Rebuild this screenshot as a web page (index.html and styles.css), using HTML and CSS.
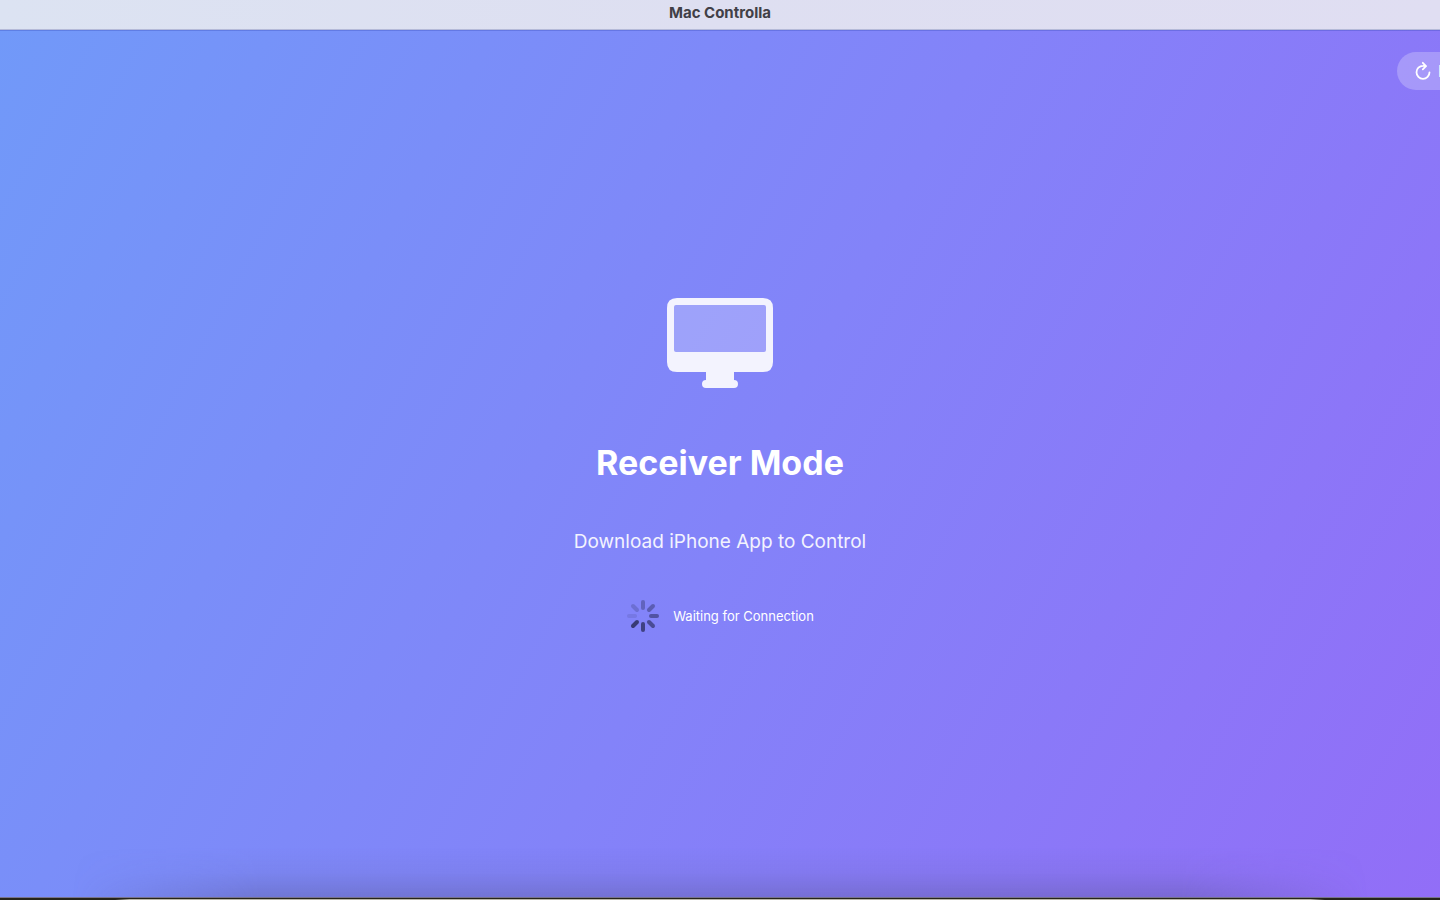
FILE: index.html
```html
<!DOCTYPE html>
<html lang="en">
<head>
<meta charset="utf-8">
<title>Mac Controlla</title>
<link rel="stylesheet" href="styles.css">
</head>
<body>
<div class="window">
  <header class="titlebar">Mac Controlla</header>
  <main class="content">
    <button class="refresh" type="button">
      <svg class="refresh-icon" viewBox="0 0 16 20" aria-hidden="true">
        <path d="M10.6 5.1Q9.3 4.7 8 4.8A6.5 6.5 0 1 0 14.5 11.3"/>
        <path d="M7.8 1.8L11 5.1L7.8 8.3"/>
      </svg>
      <span>Reset</span>
    </button>
    <section class="receiver">
      <svg class="display-icon" viewBox="0 0 106 90" aria-hidden="true">
        <path class="display-glass" d="M6 6H100V56H6Z"/>
        <path class="display-frame" fill-rule="evenodd" d="M10 0H96Q106 0 106 10V64Q106 74 96 74H67V82Q71 82 71 86Q71 90 67 90H39Q35 90 35 86Q35 82 39 82V74H10Q0 74 0 64V10Q0 0 10 0ZM9 7Q7 7 7 9V52Q7 54 9 54H97Q99 54 99 52V9Q99 7 97 7Z"/>
      </svg>
      <h1 class="title">Receiver Mode</h1>
      <p class="subtitle">Download iPhone App to Control</p>
      <div class="status" role="status">
        <svg class="spinner" viewBox="-17 -17 34 34" aria-hidden="true">
          <path opacity=".42" d="M0-8V-14"/>
          <path opacity=".5" d="M6-6L10-10"/>
          <path opacity=".62" d="M8 0H14"/>
          <path opacity=".72" d="M6 6L10 10"/>
          <path opacity=".85" d="M0 8V14"/>
          <path opacity=".95" d="M-6 6L-10 10"/>
          <path opacity=".15" d="M-8 0H-14"/>
          <path opacity=".27" d="M-6-6L-10-10"/>
        </svg>
        <span>Waiting for Connection</span>
      </div>
    </section>
  </main>
  <footer class="desktop-edge"></footer>
</div>
</body>
</html>
```
FILE: styles.css
```css
* { box-sizing: border-box; }
body {
  margin: 0;
  font-family: Inter, "Liberation Sans", sans-serif;
  color: #fff;
}
.window {
  display: flex;
  flex-direction: column;
  min-height: 100vh;
  overflow: hidden;
}
.titlebar {
  height: 30px;
  padding-top: 3px;
  background: linear-gradient(90deg, #dce3f2, #dedff1 50%, #e0def2);
  border-bottom: 1px solid #b5bad8;
  color: #414047;
  font-size: 15px;
  font-weight: 700;
  line-height: 20px;
  text-align: center;
}
.content {
  flex: 1;
  display: flex;
  flex-direction: column;
  position: relative;
  background: linear-gradient(118deg, #7199f9, #8383f9 52%, #936cf7 104%);
  box-shadow: inset 0 1px 0 rgba(50, 70, 180, 0.3);
}
.content::after {
  content: "";
  position: absolute;
  right: 0;
  bottom: 0;
  left: 0;
  height: 50px;
  background: linear-gradient(transparent, rgba(80, 80, 130, 0.08) 50%, rgba(80, 80, 130, 0.3));
  mask-image: linear-gradient(90deg, transparent 5%, #000 18%, #000 82%, transparent 95%);
  pointer-events: none;
}
.refresh {
  display: flex;
  align-items: center;
  gap: 7px;
  align-self: flex-end;
  width: 112px;
  height: 38px;
  margin: 22px -69px 0 0;
  padding: 0 18px;
  border: 0;
  border-radius: 19px;
  background: rgba(255, 255, 255, 0.24);
  color: #fff;
  font: 500 16px Inter, sans-serif;
}
.refresh-icon {
  flex: none;
  width: 16px;
  height: 20px;
  fill: none;
  stroke: #fff;
  stroke-width: 1.8;
  stroke-linecap: round;
  stroke-linejoin: round;
}
.receiver {
  display: flex;
  flex-direction: column;
  align-items: center;
  margin-top: 208px;
}
.display-icon { width: 106px; height: 90px; }
.display-frame { fill: #f3f3fe; }
.display-glass { fill: rgba(255, 255, 255, 0.23); }
.title {
  margin: 51px 0 0;
  font-size: 34px;
  font-weight: 700;
  line-height: 48px;
}
.subtitle {
  margin: 41px 0 0;
  color: #f3f3fe;
  font-size: 19px;
  line-height: 28px;
}
.status {
  display: flex;
  align-items: center;
  gap: 13px;
  margin-top: 43px;
  font-size: 13px;
  line-height: 16px;
}
.spinner {
  width: 34px;
  height: 34px;
  fill: none;
  stroke: #34366e;
  stroke-width: 4;
  stroke-linecap: round;
}
.desktop-edge {
  height: 3px;
  border-top: 1px solid #77738c;
  background:
    linear-gradient(90deg, transparent 8%, #b9b5a8 9%, #b9b5a8 91%, transparent 92%) bottom / 100% 1px no-repeat,
    #25241a;
}
```
